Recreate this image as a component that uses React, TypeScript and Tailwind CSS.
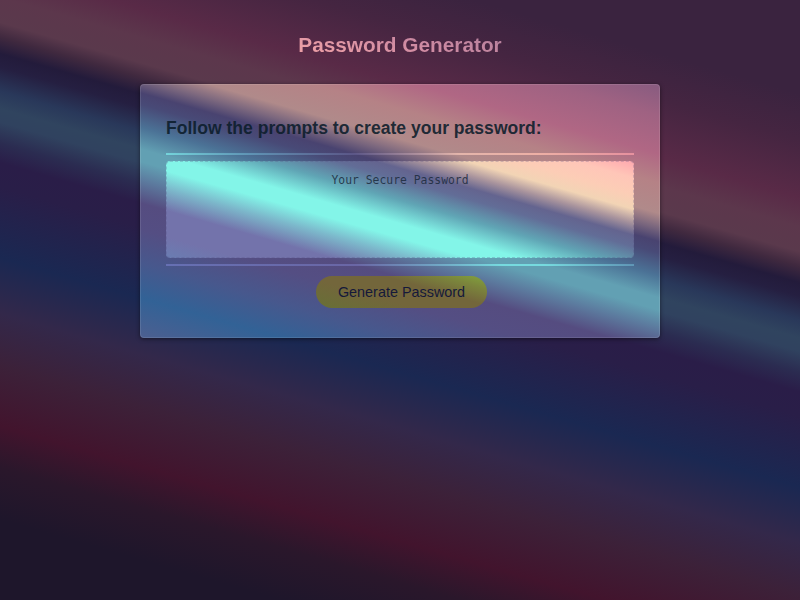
const page =
  "bg-[linear-gradient(196deg,#3a233f_0px,#3a233f_90px,#452541_135px,#592a47_190px,#5c374c_218px,#5a394c_242px,#40293f_256px,#231b3b_272px,#251f41_285px,#29385a_308px,#30445f_325px,#30425f_338px,#2b2c51_358px,#2a1d48_377px,#291e48_400px,#1a2852_468px,#33284a_522px,#3c2139_572px,#42142d_630px,#2a172b_670px,#1e162b_720px,#1e162b_797px)]";
const card =
  "bg-[linear-gradient(196deg,#80597f_110px,#9f6282_150px,#b06784_187px,#b58286_215px,#b08a8a_244px,#7b677e_258px,#494370_271px,#484a77_282px,#4b7296_304px,#62a0b3_325px,#62a0b3_337px,#5c7a9e_355px,#554c80_377px,#544e83_402px,#47588d_435px,#326296_468px,#4d5f90_507px,#605a80_570px)]";
const field =
  "bg-[linear-gradient(196deg,#ffa3ad_198px,#ffc6b8_217px,#fccdb6_233px,#f2d4b5_247px,#a9949d_260px,#64648f_272px,#626d97_283px,#60a5b5_303px,#83f5e8_325px,#83f5e8_339px,#7cb8cb_356px,#7373ab_377px,#7373ab_402px,#6285b8_440px)]";
const rule =
  "bg-[linear-gradient(196deg,#e58c9d_190px,#edafa5_220px,#e3b5ab_242px,#5b5687_271px,#5f94b5_300px,#76dade_325px,#76dade_337px,#6a66a5_377px,#6670b3_430px)]";
const button =
  "bg-[linear-gradient(196deg,#82a83d_350px,#7b863c_364px,#73663b_380px,#73663b_402px,#677036_430px)]";
const title =
  "bg-[linear-gradient(196deg,#b37f9c_115px,#cf8ba3_150px,#eb9ea6_182px)]";

export default function App() {
  return (
    <div className={`h-[600px] w-full overflow-hidden bg-fixed font-['Liberation_Sans',Arial,sans-serif] ${page}`}>
      <header className="flex h-[84px] justify-center pt-[33px]">
        <h1 className={`h-6 bg-fixed bg-clip-text text-[20.8px] leading-6 font-bold text-transparent ${title}`}>
          Password Generator
        </h1>
      </header>
      <main
        className={`mx-auto h-[254px] w-[520px] rounded-[4px] border border-white/10 bg-fixed px-[25px] shadow-[0_1px_4px_rgba(0,0,0,0.5)] ${card}`}
      >
        <h2 className="pt-[33px] text-[17.57px] leading-5 font-bold text-[#0c1d2b]/90">
          Follow the prompts to create your password:
        </h2>
        <div className={`mt-[15px] h-[2px] bg-fixed ${rule}`} />
        <textarea
          readOnly
          placeholder="Your Secure Password"
          className={`mt-[6px] block h-[97px] w-full resize-none rounded-[4px] border border-dashed border-[#554c80]/25 bg-fixed pt-[11px] text-center font-['DejaVu_Sans_Mono',monospace] text-[11.4px] leading-[14px] outline-none placeholder:text-[#1b2a3c]/85 ${field}`}
        />
        <div className={`mt-[6px] h-[2px] bg-fixed ${rule}`} />
        <button
          className={`mt-[10px] ml-[150px] block h-8 w-[171px] rounded-full bg-fixed pt-px text-[14.4px] text-[#15193a] ${button}`}
        >
          Generate Password
        </button>
      </main>
    </div>
  );
}
